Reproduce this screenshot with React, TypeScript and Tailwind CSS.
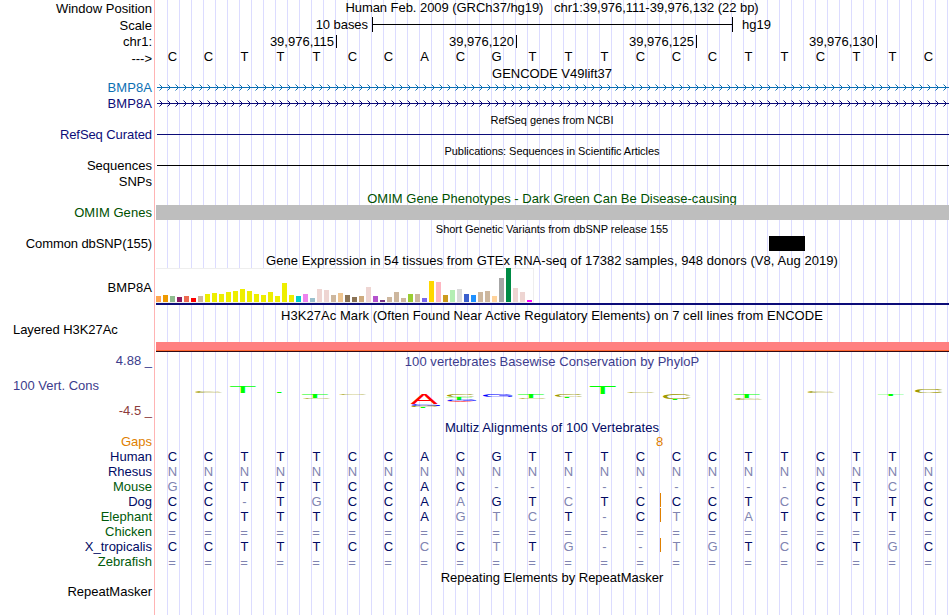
import React from 'react';

interface LogoGlyph {
  ch: 'A' | 'C' | 'G' | 'T';
  x: number;
  y: number;
  w: number;
  h: number;
}

interface Species {
  name: string;
  color: string;
  bases: string;
  insert?: boolean;
}

const reference = 'CCTTTCCACGTTTCCCTTCTTC';

const species: Species[] = [
  { name: 'Human', color: 'text-[#000a64]', bases: 'CCTTTCCACGTTTCCCTTCTTC' },
  { name: 'Rhesus', color: 'text-[#000a64]', bases: 'NNNNNNNNNNNNNNNNNNNNNN' },
  { name: 'Mouse', color: 'text-[#005a0a]', bases: 'GCTTTCCAC---------CTCC' },
  { name: 'Dog', color: 'text-[#000a64]', bases: 'CC-TGCCAAGTCTCCCTCCTTC', insert: true },
  { name: 'Elephant', color: 'text-[#005a0a]', bases: 'CCTTTCCAGTCT-CTCATCTTC', insert: true },
  { name: 'Chicken', color: 'text-[#005a0a]', bases: '======================' },
  { name: 'X_tropicalis', color: 'text-[#000a64]', bases: 'CCTTTCCCCTTG--TGTCCTGC', insert: true },
  { name: 'Zebrafish', color: 'text-[#005a0a]', bases: '======================' },
];

// [height, color] for each GTEx tissue
const tissues: [number, string][] = [
  [6, '#ffa54f'], [7, '#ee9a00'], [6, '#8fbc8f'], [5, '#8b1c62'], [6, '#ee6a50'], [4, '#ff0000'],
  [6, '#cdb79e'], [8, '#eeee00'], [9, '#eeee00'], [8, '#eeee00'], [10, '#eeee00'], [11, '#eeee00'],
  [13, '#eeee00'], [11, '#eeee00'], [8, '#eeee00'], [7, '#eeee00'], [10, '#eeee00'], [6, '#eeee00'],
  [19, '#eeee00'], [7, '#eeee00'], [6, '#00cdcd'], [8, '#ee82ee'], [4, '#9ac0cd'], [13, '#eed5d2'],
  [12, '#eed5d2'], [7, '#cdb79e'], [9, '#eec591'], [7, '#8b7355'], [5, '#8b7355'], [6, '#cdaa7d'],
  [15, '#eed5d2'], [6, '#b452cd'], [2, '#7a378b'], [5, '#cdb79e'], [10, '#cdb79e'], [4, '#cdb79e'],
  [8, '#9acd32'], [8, '#cdb79e'], [4, '#7a67ee'], [21, '#ffd700'], [20, '#ffb6c1'], [7, '#cd9b1d'],
  [12, '#b4eeb4'], [13, '#d9d9d9'], [8, '#3a5fcd'], [7, '#1e90ff'], [10, '#cdb79e'], [11, '#cdb79e'],
  [6, '#ffd39b'], [24, '#a6a6a6'], [34, '#008b45'], [14, '#eed5d2'], [10, '#eed5d2'], [2, '#ff00ff'],
];

const logo: LogoGlyph[] = [
  { ch: 'C', x: 195.3, y: 391, w: 27.4, h: 2 },
  { ch: 'T', x: 230, y: 386, w: 25.7, h: 7 },
  { ch: 'T', x: 266.5, y: 392, w: 25.7, h: 1 },
  { ch: 'T', x: 302, y: 394, w: 26, h: 4 },
  { ch: 'C', x: 303.3, y: 398, w: 27.4, h: 1 },
  { ch: 'C', x: 339.3, y: 394, w: 27.5, h: 1 },
  { ch: 'A', x: 410.7, y: 394, w: 27, h: 10 },
  { ch: 'G', x: 411.5, y: 404, w: 29.2, h: 2 },
  { ch: 'C', x: 411, y: 405.5, w: 27, h: 1.5 },
  { ch: 'T', x: 410, y: 407, w: 26, h: 1 },
  { ch: 'C', x: 447, y: 394, w: 27.7, h: 3 },
  { ch: 'T', x: 446, y: 397, w: 26, h: 3 },
  { ch: 'G', x: 447, y: 400, w: 30, h: 1.5 },
  { ch: 'A', x: 447, y: 401, w: 26.5, h: 1 },
  { ch: 'G', x: 483, y: 394, w: 30, h: 3 },
  { ch: 'T', x: 518, y: 394, w: 26, h: 4 },
  { ch: 'C', x: 519, y: 398, w: 27.7, h: 1 },
  { ch: 'C', x: 555, y: 394, w: 27.7, h: 3 },
  { ch: 'T', x: 554, y: 397, w: 26, h: 1 },
  { ch: 'T', x: 589.7, y: 386, w: 26, h: 8 },
  { ch: 'C', x: 627.3, y: 392, w: 27.7, h: 1 },
  { ch: 'C', x: 663, y: 394, w: 28, h: 5 },
  { ch: 'T', x: 662, y: 399, w: 26, h: 1 },
  { ch: 'T', x: 733.7, y: 394, w: 26, h: 4 },
  { ch: 'C', x: 735.3, y: 398, w: 27.4, h: 2 },
  { ch: 'C', x: 807.7, y: 391, w: 27.4, h: 2 },
  { ch: 'T', x: 877.7, y: 394, w: 26, h: 2 },
  { ch: 'C', x: 915, y: 389, w: 28, h: 4 },
];

// ink extents of the letters, in em
const ink = {
  A: { left: 0.003, width: 0.661, bottom: 0, height: 0.688, color: '#ff0000' },
  C: { left: 0.05, width: 0.64, bottom: 0.01, height: 0.709, color: '#a09a00' },
  G: { left: 0.05, width: 0.67, bottom: 0.01, height: 0.709, color: '#0000ff' },
  T: { left: 0.02, width: 0.568, bottom: 0, height: 0.688, color: '#00ff00' },
};

const chevrons = Array.from({ length: 99 }, (_, i) => `M${3.5 + i * 8} .5l3 3l-3 3`).join('');

interface RowProps {
  height: string;
  label?: string;
  labelClass?: string;
  children?: React.ReactNode;
}

function Row({ height, label, labelClass = '', children }: RowProps) {
  return (
    <div className={`flex shrink-0 ${height}`}>
      <div className={`mr-1 w-[152px] shrink-0 text-right ${labelClass}`}>{label}</div>
      <div className="w-[793px] shrink-0">{children}</div>
    </div>
  );
}

function Title({ children, className = '' }: { children: React.ReactNode; className?: string }) {
  return <div className={`w-[792px] text-center whitespace-pre ${className}`}>{children}</div>;
}

function Bases({ bases, plain = false }: { bases: string; plain?: boolean }) {
  return (
    <div className="-ml-[1.5px] grid w-[792px] grid-cols-[repeat(22,36px)] text-center">
      {bases.split('').map((base, i) => {
        const color = plain ? 'text-black' : base === reference[i] ? 'text-[#000a64]' : 'text-[#8084b1]';
        return (
          <span key={i} className={`${color} ${base === '=' ? 'pt-px pr-px' : ''}`}>
            {base}
          </span>
        );
      })}
    </div>
  );
}

function GeneLine({ className }: { className: string }) {
  return (
    <svg className={`mt-1 block ${className}`} width="793" height="7" viewBox="0 0 793 7" fill="none">
      <path d="M1 3.5H793" stroke="currentColor" />
      <path d={chevrons} stroke="currentColor" />
    </svg>
  );
}

function ConservationLogo() {
  return (
    <svg
      className="mt-[14px] block"
      width="793"
      height="30"
      viewBox="156 383 793 30"
      textRendering="geometricPrecision"
    >
      {logo.map((g, i) => {
        const m = ink[g.ch];
        const sx = g.w / (m.width * 100);
        const sy = g.h / (m.height * 100);
        const tx = g.x - m.left * 100 * sx;
        const ty = g.y + g.h - m.bottom * 100 * sy;
        return (
          <text key={i} transform={`matrix(${sx} 0 0 ${sy} ${tx} ${ty})`} fontSize="100" letterSpacing="0" fill={m.color}>
            {g.ch}
          </text>
        );
      })}
    </svg>
  );
}

export default function App() {
  return (
    <div className="relative flex h-[615px] w-[950px] flex-col overflow-hidden bg-white bg-[linear-gradient(90deg,transparent_11px,#dcdcff_11px)] bg-[length:12px_100%] font-['Liberation_Sans',Arial,sans-serif] text-[13px] leading-[15px] text-black">
      {/* the guide lines only belong to the plot area */}
      <div className="absolute inset-y-0 left-0 w-[156px] bg-white" />
      <div className="absolute inset-y-0 left-[154px] w-px bg-[#ffb4b4]" />
      <div className="absolute inset-y-0 right-0 w-px bg-white" />

      <div className="relative flex flex-col">
        <Row height="h-[17px]" label="Window Position" labelClass="pt-px">
          <Title className="tracking-[-0.05px]">
            {'Human Feb. 2009 (GRCh37/hg19)   chr1:39,976,111-39,976,132 (22 bp)'}
          </Title>
        </Row>
        <Row height="h-[17px]" label="Scale" labelClass="pt-px">
          <div className="flex">
            <span className="mr-1 w-[212px] text-right tracking-[-0.05px]">10 bases</span>
            <div className="h-[15px] w-[361px] border-x border-black pt-[7px]">
              <div className="h-px bg-black" />
            </div>
            <span className="ml-[9px]">hg19</span>
          </div>
        </Row>
        <Row height="h-[15px]" label="chr1:">
          <div className="flex h-full pt-px pb-px text-right">
            {['39,976,115', '39,976,120', '39,976,125', '39,976,130'].map((pos, i) => (
              <div key={pos} className={`border-r border-black pr-[2px] ${i === 0 ? 'w-[181px]' : 'w-[180px]'}`}>
                <div className="-mt-px">{pos}</div>
              </div>
            ))}
          </div>
        </Row>
        <Row height="h-[17px]" label="--->" labelClass="pt-[2px]">
          <Bases bases={reference} plain />
        </Row>

        <Row height="h-[14px]">
          <Title>GENCODE V49lift37</Title>
        </Row>
        <Row height="h-4" label="BMP8A" labelClass="text-[#0c6fb3] tracking-[0.07px]">
          <GeneLine className="text-[#0c6fb3]" />
        </Row>
        <Row height="h-4" label="BMP8A" labelClass="text-[#0c0c78] tracking-[0.07px]">
          <GeneLine className="text-[#0c0c78]" />
        </Row>

        <Row height="h-[15px]">
          <Title className="pt-px text-[11px] tracking-[-0.06px]">RefSeq genes from NCBI</Title>
        </Row>
        <Row height="h-4" label="RefSeq Curated" labelClass="text-[#0c0c78] tracking-[-0.08px]">
          <div className="mt-[7px] ml-px h-px bg-[#0c0c78]" />
        </Row>

        <Row height="h-[15px]">
          <Title className="pt-px text-[11px] tracking-[-0.06px]">Publications: Sequences in Scientific Articles</Title>
        </Row>
        <Row height="h-4" label="Sequences">
          <div className="mt-[7px] ml-px h-px bg-black" />
        </Row>
        <Row height="h-4" label="SNPs" />

        <Row height="h-[15px]">
          <Title className="pt-px tracking-[0.02px] text-[#005000]">
            OMIM Gene Phenotypes - Dark Green Can Be Disease-causing
          </Title>
        </Row>
        <Row height="h-[15px]" label="OMIM Genes" labelClass="text-[#005000] tracking-[0.05px]">
          <div className="relative h-[15px] bg-[#bebebe]" />
        </Row>

        <Row height="h-4">
          <Title className="pt-[2px] text-[11px] tracking-[-0.02px]">Short Genetic Variants from dbSNP release 155</Title>
        </Row>
        <Row height="h-4" label="Common dbSNP(155)" labelClass="tracking-[-0.1px]">
          <div className="ml-[613px] h-[15px] w-9 bg-black" />
        </Row>

        <Row height="h-4">
          <Title className="pt-px tracking-[0.05px]">
            Gene Expression in 54 tissues from GTEx RNA-seq of 17382 samples, 948 donors (V8, Aug 2019)
          </Title>
        </Row>
        <Row height="h-[37px]" label="BMP8A" labelClass="pt-3 tracking-[0.07px]">
          <div className="flex h-[35px] w-[378px] items-end gap-[2px] border border-l-0 border-[#eeeeee] bg-white">
            {tissues.map(([height, color], i) => (
              <div key={i} className="w-[5px] shrink-0" style={{ height, backgroundColor: color }} />
            ))}
          </div>
          <div className="h-[2px] bg-[#0c0c78]" />
        </Row>

        <Row height="h-[15px]">
          <Title className="pt-[3px] tracking-[0.05px]">
            H3K27Ac Mark (Often Found Near Active Regulatory Elements) on 7 cell lines from ENCODE
          </Title>
        </Row>
        <Row height="h-[33px]" label="Layered H3K27Ac" labelClass="pt-[2px] pl-[13px] !text-left tracking-[-0.05px]">
          <div className="mt-[22px] h-2 bg-[#ff8080]" />
          <div className="h-px bg-[#ff6633]" />
          <div className="h-px bg-[#330a14]" />
        </Row>

        <div className="flex h-[67px] text-[#3c3c8c]">
          <div className="mr-1 flex w-[152px] shrink-0 flex-col gap-[10px] text-right">
            <span>4.88 _</span>
            <span className="pl-[13px] text-left">100 Vert. Cons</span>
            <span className="text-[#8c3c3c]">-4.5 _</span>
          </div>
          <div>
            <Title className="pt-px tracking-[0.05px]">100 vertebrates Basewise Conservation by PhyloP</Title>
            <ConservationLogo />
          </div>
        </div>

        <Row height="h-[14px]">
          <Title className="tracking-[0.09px] text-[#000a64]">Multiz Alignments of 100 Vertebrates</Title>
        </Row>
        <Row height="h-[15px]" label="Gaps" labelClass="text-[#e08000]">
          <div className="ml-[500px] w-[7px] text-center text-[#e08000]">8</div>
        </Row>
        {species.map(s => (
          <Row key={s.name} height="h-[15px]" label={s.name} labelClass={s.color}>
            <div className="relative">
              <Bases bases={s.bases} />
              {s.insert && <div className="absolute -top-px left-[504px] h-[14px] w-px bg-[#e08000]" />}
            </div>
          </Row>
        ))}

        <Row height="h-[15px]">
          <Title className="pt-px">Repeating Elements by RepeatMasker</Title>
        </Row>
        <Row height="h-[15px]" label="RepeatMasker" />
      </div>
    </div>
  );
}
